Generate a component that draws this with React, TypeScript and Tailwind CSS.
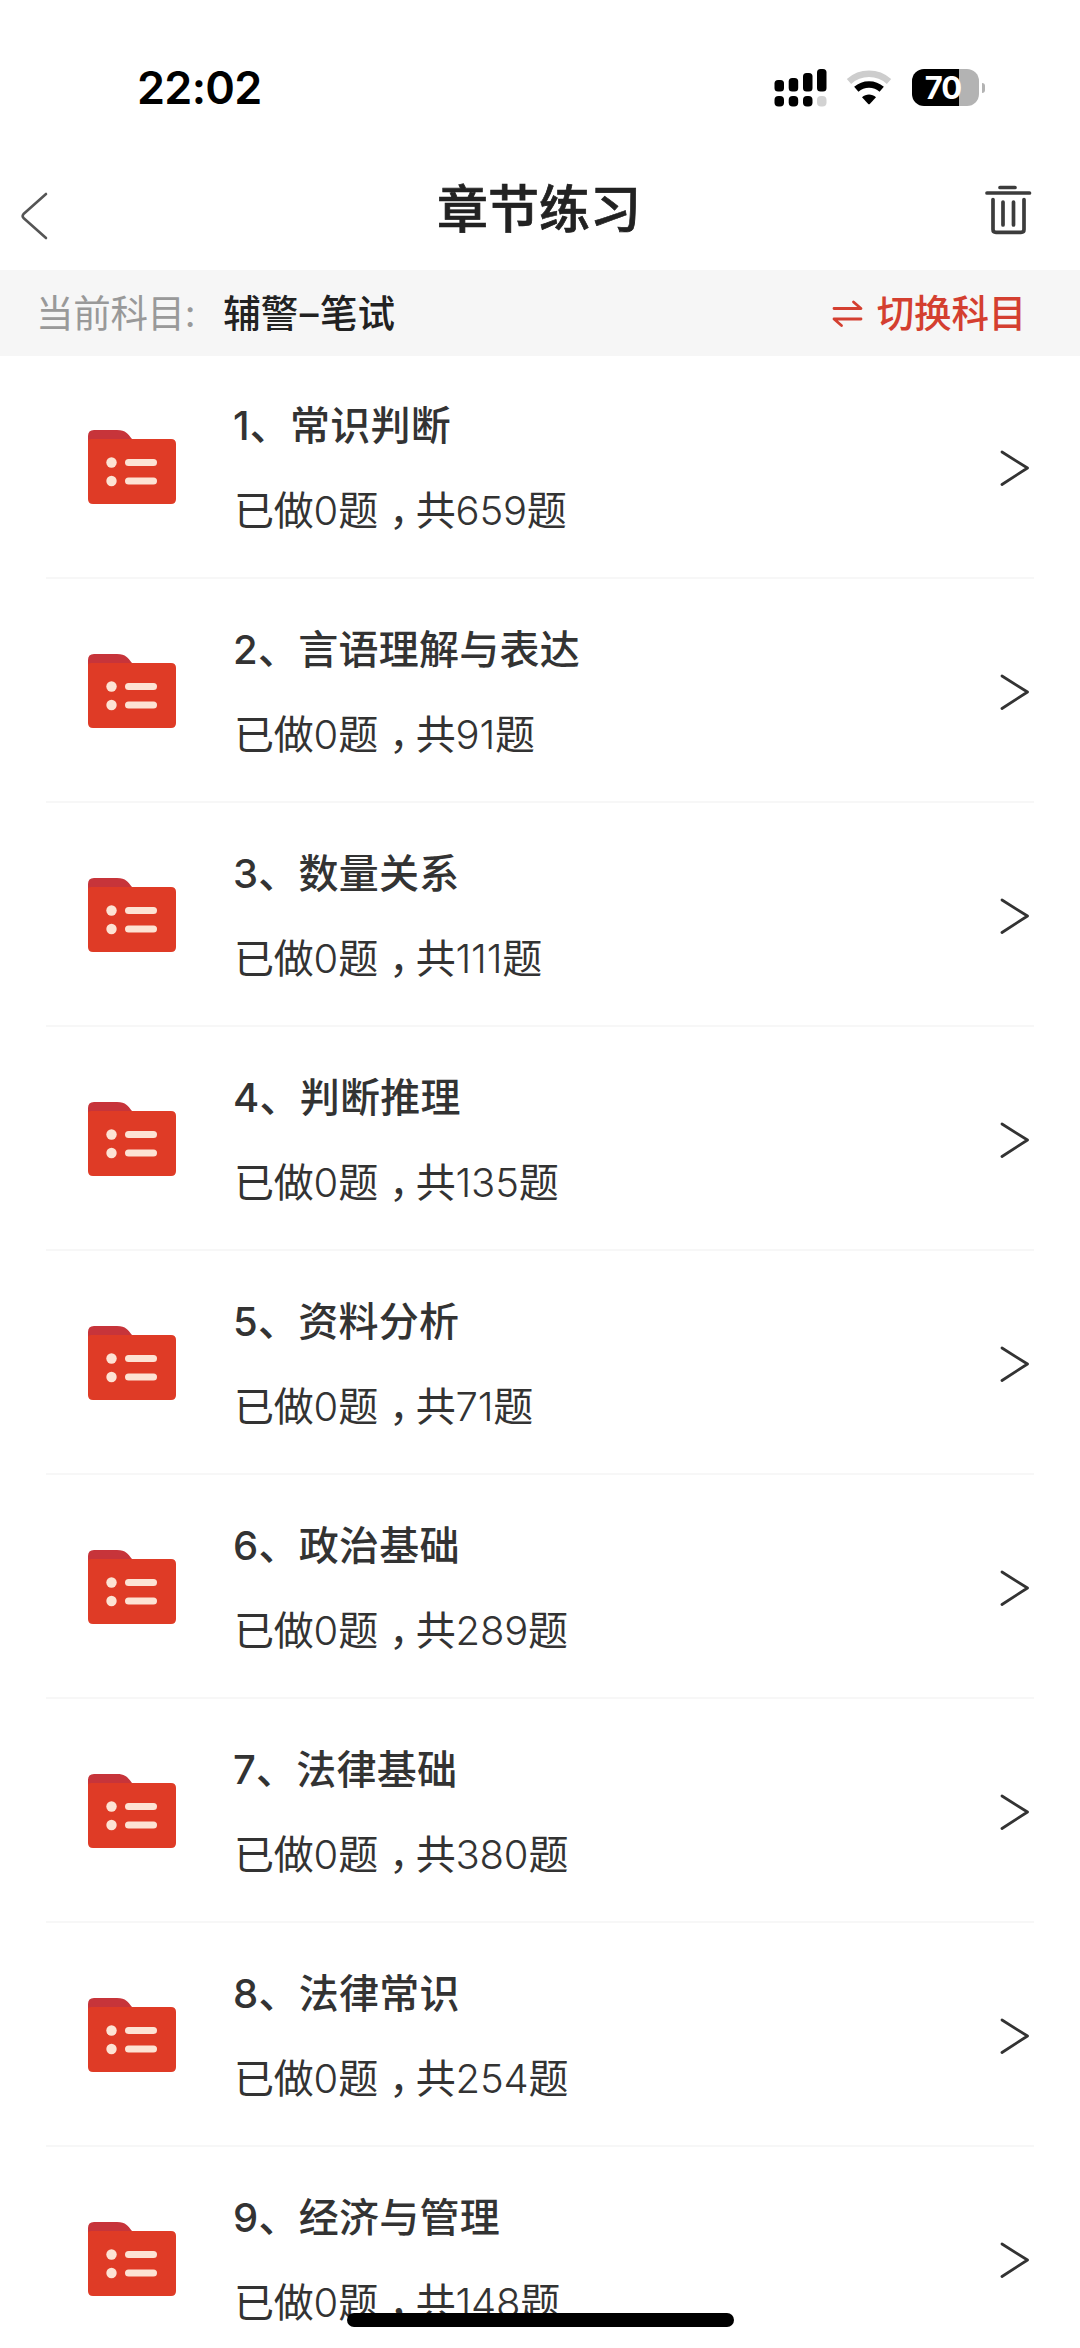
const FONT = "font-['Inter','Noto_Sans_CJK_SC',sans-serif]";

const chapters = [
  { name: '常识判断', total: 659 },
  { name: '言语理解与表达', total: 91 },
  { name: '数量关系', total: 111 },
  { name: '判断推理', total: 135 },
  { name: '资料分析', total: 71 },
  { name: '政治基础', total: 289 },
  { name: '法律基础', total: 380 },
  { name: '法律常识', total: 254 },
  { name: '经济与管理', total: 148 },
];

function StatusBar() {
  return (
    <div className="flex h-[174px] shrink-0 items-start justify-between pl-[137px] pr-[95px] pt-[69px]">
      <span className="text-[45px] font-semibold leading-[37px] tracking-[-0.7px] text-black">22:02</span>
      <div className="flex items-start">
        <svg width="53" height="38" viewBox="0 0 53 38">
          <rect x="0.5" y="11" width="9.5" height="11.5" rx="3.5" />
          <rect x="14.7" y="9" width="9.5" height="13.5" rx="3.5" />
          <rect x="29" y="4" width="9.5" height="18.5" rx="3.5" />
          <rect x="43" y="0" width="9.5" height="22.5" rx="3.5" />
          <rect x="0.5" y="27" width="9.5" height="10.5" rx="4" />
          <rect x="14.7" y="27" width="9.5" height="10.5" rx="4" />
          <rect x="29" y="27" width="9.5" height="10.5" rx="4" />
          <rect x="43" y="27" width="9.5" height="10.5" rx="4" fill="#d2d2d2" />
        </svg>
        <svg className="ml-[19px]" width="46" height="38" viewBox="0 0 46 38">
          <path d="M3 12.5C14.5 2.3 31.5 2.3 43 12.5" fill="none" stroke="#cdcdcd" strokeWidth="6.5" />
          <path d="M10.3 20.2C17.5 13.8 28.5 13.8 35.7 20.2" fill="none" stroke="#000" strokeWidth="6.5" />
          <path d="M16 28.3C20 24.6 26 24.6 30 28.3L24 34.7Q23 35.7 22 34.7Z" />
        </svg>
        <div className="ml-[20px] flex items-center">
          <div className="flex h-[37px] w-[67px] items-center justify-center rounded-[12px] bg-[linear-gradient(90deg,#000_0_47px,#b3b3b3_47px)] pr-[5px] text-[31px] font-bold leading-none tracking-[-1px] text-white">
            70
          </div>
          <div className="ml-[3px] h-[10px] w-[3px] rounded-r-full bg-[#b3b3b3]" />
        </div>
      </div>
    </div>
  );
}

function Header() {
  return (
    <header className="flex h-24 shrink-0 items-start justify-between pl-5 pr-12">
      <svg className="mt-[17px]" width="60" height="50" viewBox="0 0 60 50" fill="none" stroke="#555" strokeWidth="2.6" strokeLinecap="round" strokeLinejoin="round">
        <path d="M26 3L3.5 23Q1.8 25 3.5 27L26 47" />
      </svg>
      <h1 className="ml-[14px] mt-[6px] text-[51px] font-medium leading-[60px] text-[#222] [-webkit-text-stroke:0.7px_#222]">章节练习</h1>
      <svg className="mt-[10px]" width="48" height="51" viewBox="0 0 48 51" fill="none" stroke="#3c3c3c" strokeWidth="3.7" strokeLinecap="round" strokeLinejoin="round">
        <path d="M16 3.5H31M3 9H45.5M9 15.5V45.5Q9 48.3 12 48.3H37Q40 48.3 40 45.5V15.5M19 18V41M29.5 18V41" />
      </svg>
    </header>
  );
}

function SubjectBar() {
  return (
    <div className="flex h-[86px] shrink-0 items-center bg-[#f6f6f6] pl-[36px] pr-[54px] pt-0.5 text-[37.5px] leading-[50px]">
      <span className="tracking-[-0.3px] text-[#999]">当前科目:</span>
      <span className="ml-[28px] font-medium text-[#222]">
        辅警<span className="mx-[1.5px]">–</span>笔试
      </span>
      <div className="ml-auto flex items-center font-medium text-[#d43f30]">
        <svg className="mr-[14px]" width="32" height="30" viewBox="0 0 32 30" fill="none" stroke="currentColor" strokeWidth="2.8" strokeLinecap="round" strokeLinejoin="round">
          <path d="M3 9.5H30L22.5 3M30 20H3L10.5 26.5" />
        </svg>
        <span className="tracking-[-0.2px]">切换科目</span>
      </div>
    </div>
  );
}

function FolderIcon() {
  return (
    <svg width="88" height="74" viewBox="0 0 88 74">
      <path d="M0 6Q0 0 6 0H29C38 0 40 4 44 9V16H0Z" fill="#c7343a" />
      <path d="M0 11Q0 9 3 9H83Q88 9 88 14V69Q88 74 83 74H5Q0 74 0 69Z" fill="#df3b26" />
      <g fill="#fde3d4">
        <circle cx="23.5" cy="32.5" r="5.2" />
        <circle cx="23.5" cy="51" r="5.2" />
        <rect x="37" y="29" width="32" height="7" rx="3.5" />
        <rect x="37" y="47.5" width="32" height="7" rx="3.5" />
      </g>
    </svg>
  );
}

function ChapterRow({ index, name, total }: { index: number; name: string; total: number }) {
  return (
    <li className="mx-[46px] flex h-56 shrink-0 items-start border-b-2 border-[#f7f7f7] pl-[42px] pr-[4px]">
      <div className="mt-[75px]">
        <FolderIcon />
      </div>
      <div className="ml-[57px] mt-[43px] whitespace-nowrap text-[#333]">
        <p className="text-[40px] font-medium leading-[56px] tracking-[0.25px]">
          {index}、{name}
        </p>
        <p className="ml-px mt-[29px] text-[40px] leading-[56px] tracking-[-0.2px]">
          已做<span className="font-[350]">0</span>题<span className="relative left-[11px] mr-[-2px]">，</span>共
          <span className="font-[350]">{total}</span>题
        </p>
      </div>
      <svg className="ml-auto mt-[94px]" width="30" height="38" viewBox="0 0 30 38" fill="none" stroke="#333" strokeWidth="2.8" strokeLinecap="round" strokeLinejoin="round">
        <path d="M2 3L27.5 19L2 35.5" />
      </svg>
    </li>
  );
}

export default function App() {
  return (
    <div className={`relative flex h-[2348px] w-[1080px] flex-col overflow-hidden bg-white ${FONT}`}>
      <StatusBar />
      <Header />
      <SubjectBar />
      <ul className="-mt-px flex flex-col">
        {chapters.map((c, i) => (
          <ChapterRow key={c.name} index={i + 1} name={c.name} total={c.total} />
        ))}
      </ul>
      <div className="absolute bottom-[21px] left-[347px] h-[14px] w-[387px] rounded-full bg-black" />
    </div>
  );
}
